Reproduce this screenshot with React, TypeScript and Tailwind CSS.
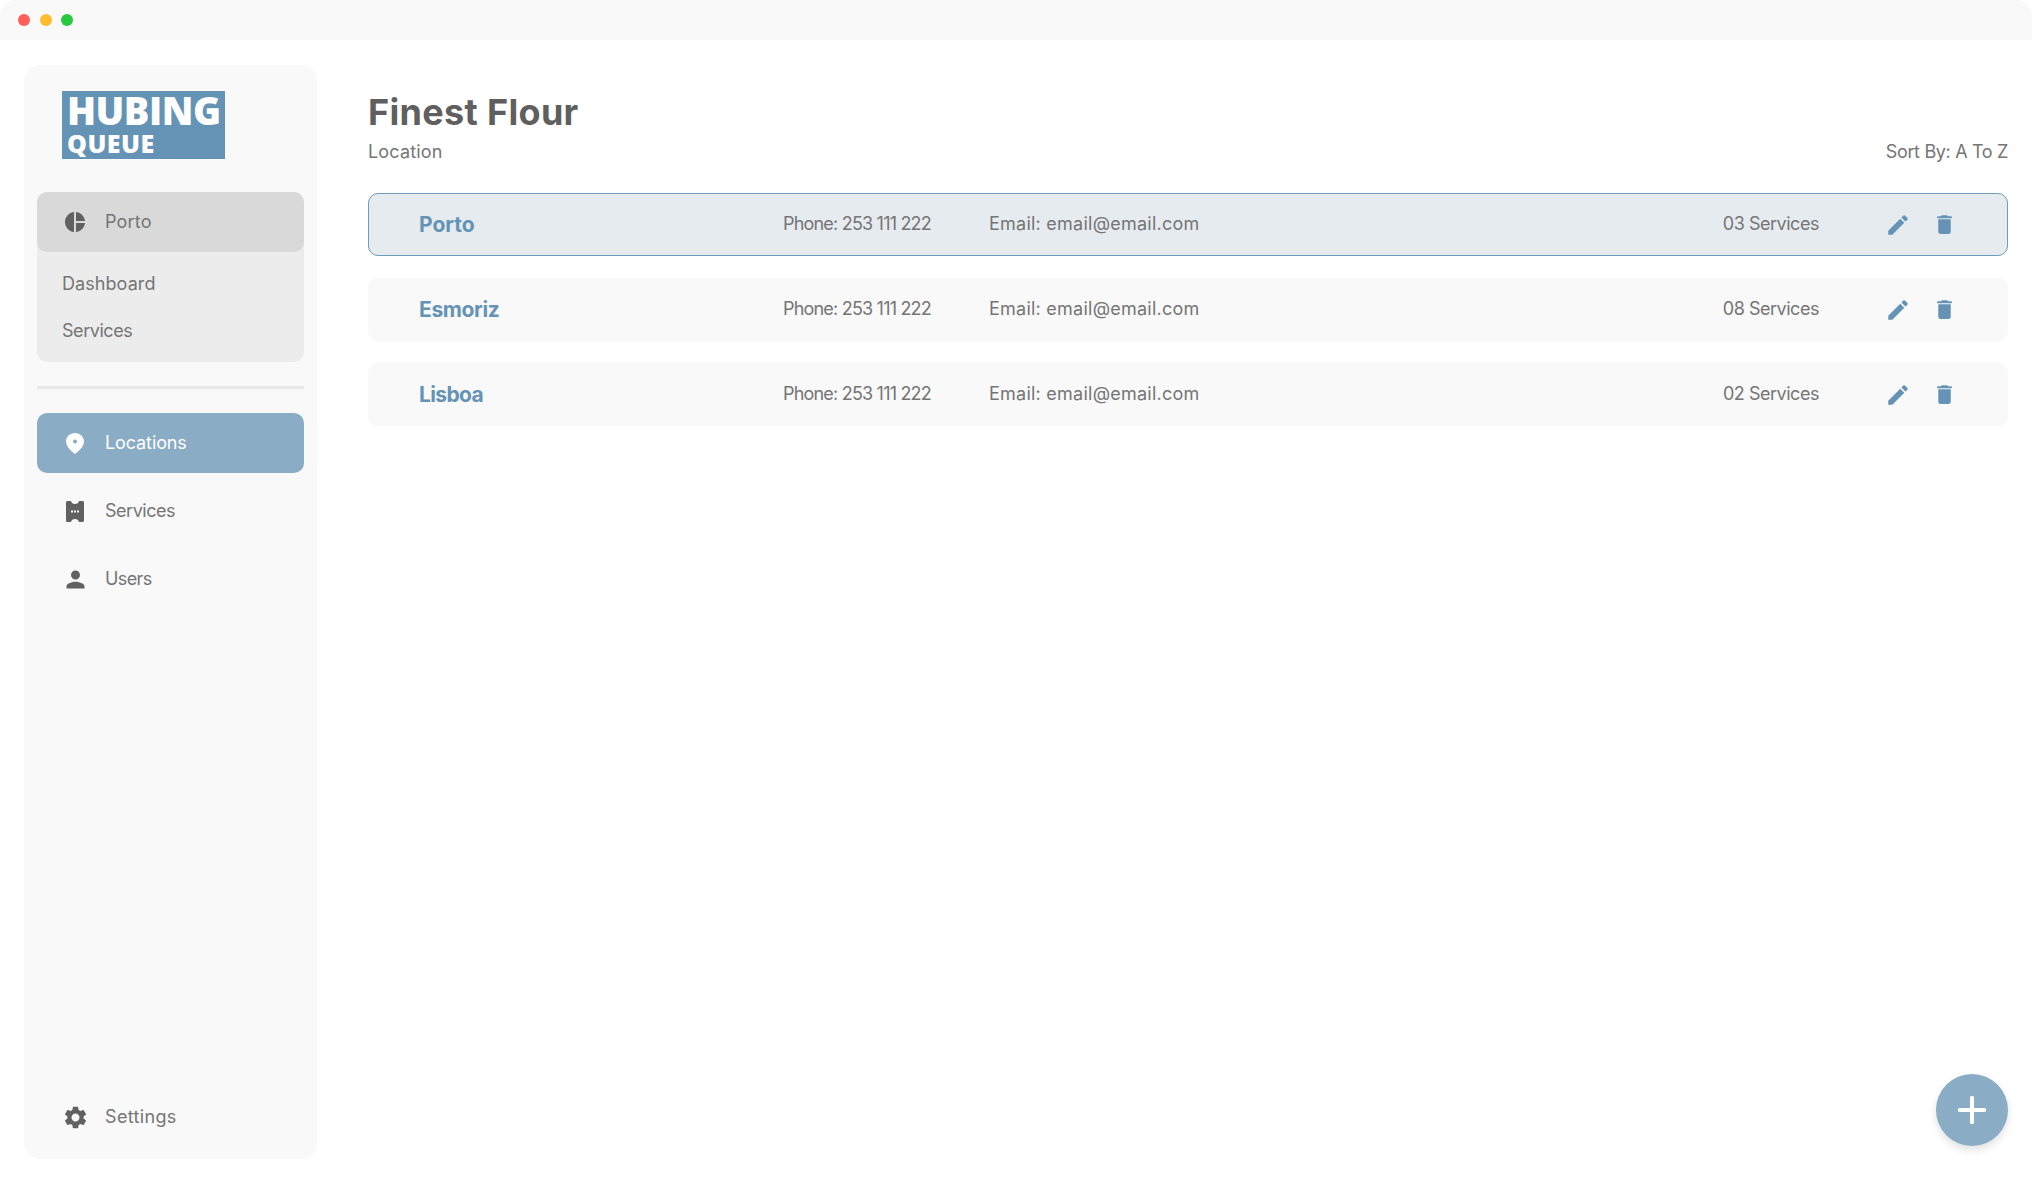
import { Plus } from "lucide-react";

const font = "font-['Inter','Liberation_Sans',sans-serif]";

const locations = [
  { name: "Porto", nameClass: "", services: "03 Services", selected: true },
  { name: "Esmoriz", nameClass: "tracking-[-0.37px]", services: "08 Services", selected: false },
  { name: "Lisboa", nameClass: "tracking-[-0.65px]", services: "02 Services", selected: false },
];

function PieIcon() {
  return (
    <svg viewBox="0 0 24 24" className="w-6 h-6 fill-[#616161]">
      <path d="M11 2v20c-5.07-.5-9-4.79-9-10s3.93-9.5 9-10zm2.03 0v8.99H22c-.47-4.74-4.24-8.52-8.97-8.99zm0 11.01V22c4.74-.47 8.5-4.25 8.97-8.99h-8.97z" />
    </svg>
  );
}

function PinIcon() {
  return (
    <svg viewBox="0 0 18 21" className="w-[18px] h-[21px] fill-white">
      <path
        fillRule="evenodd"
        d="M9 0C4 0 0 3.8 0 8.6 0 13.2 5 18.4 9 21c4-2.6 9-7.8 9-12.4C18 3.8 14 0 9 0zm0 6.6a2 2 0 1 1 0 4 2 2 0 0 1 0-4z"
      />
    </svg>
  );
}

function TicketIcon() {
  return (
    <svg viewBox="0 0 18 21" className="w-[18px] h-[21px] fill-[#616161]">
      <path
        fillRule="evenodd"
        d="M1.5 0H5c.3 1.8 2 3 4 3s3.700-1.200 4-3h3.500C17.400 0 18 .6 18 1.500v18c0 .9-.6 1.500-1.500 1.500H13c-.3-1.800-2-3-4-3s-3.700 1.200-4 3H1.500C.6 21 0 20.400 0 19.500v-18C0 .6.6 0 1.500 0zM5 9.500v2h2v-2H5zm3 0v2h2v-2H8zm3 0v2h2v-2h-2z"
      />
    </svg>
  );
}

function PersonIcon() {
  return (
    <svg viewBox="0 0 24 24" className="w-[27px] h-[27px] fill-[#616161]">
      <path d="M12 12c2.210 0 4-1.790 4-4s-1.790-4-4-4-4 1.790-4 4 1.790 4 4 4zm0 2c-2.670 0-8 1.340-8 4v2h16v-2c0-2.660-5.330-4-8-4z" />
    </svg>
  );
}

function GearIcon() {
  return (
    <svg viewBox="0 0 24 24" className="w-[27px] h-[27px] fill-[#616161]">
      <path d="M19.14 12.940c.04-.3.06-.61.06-.94 0-.32-.02-.64-.07-.94l2.030-1.580c.18-.14.23-.41.12-.61l-1.920-3.320c-.12-.22-.37-.29-.59-.22l-2.390.96c-.5-.38-1.030-.7-1.620-.94l-.36-2.540c-.04-.24-.24-.41-.48-.41h-3.840c-.24 0-.43.17-.47.41l-.36 2.540c-.59.24-1.130.57-1.620.94l-2.390-.96c-.22-.08-.47 0-.59.22L2.740 8.870c-.12.21-.08.47.12.61l2.030 1.580c-.05.3-.09.63-.09.94s.02.64.07.94l-2.030 1.580c-.18.14-.23.41-.12.61l1.920 3.320c.12.22.37.29.59.22l2.390-.96c.5.38 1.030.7 1.620.94l.36 2.540c.05.24.24.41.48.41h3.840c.24 0 .44-.17.47-.41l.36-2.540c.59-.24 1.130-.56 1.620-.94l2.390.96c.22.08.47 0 .59-.22l1.920-3.320c.12-.22.07-.47-.12-.61l-2.010-1.580zM12 15.600c-1.980 0-3.600-1.620-3.600-3.600s1.620-3.600 3.600-3.600 3.600 1.620 3.600 3.600-1.620 3.600-3.600 3.600z" />
    </svg>
  );
}

function EditIcon() {
  return (
    <svg viewBox="0 0 24 24" className="w-[26px] h-[26px] fill-[#6593b6]">
      <path d="M3 17.250V21h3.750L17.810 9.940l-3.750-3.750L3 17.250zM20.710 7.040c.39-.39.39-1.020 0-1.410l-2.340-2.340c-.39-.39-1.020-.39-1.410 0l-1.830 1.830 3.750 3.750 1.830-1.830z" />
    </svg>
  );
}

function TrashIcon() {
  return (
    <svg viewBox="0 0 24 24" className="w-[25px] h-[25px] fill-[#6593b6]">
      <path d="M6 19c0 1.100.9 2 2 2h8c1.100 0 2-.9 2-2V7H6v12zM19 4h-3.500l-1-1h-5l-1 1H5v2h14V4z" />
    </svg>
  );
}

function NavItem({
  icon,
  label,
  labelClass,
  active,
}: {
  icon: React.ReactNode;
  label: string;
  labelClass: string;
  active?: boolean;
}) {
  return (
    <div
      className={`h-[60px] rounded-[10px] flex items-center ${
        active ? "bg-[#8aacc5] text-white" : "text-[#757575]"
      }`}
    >
      <span className="w-[68px] flex justify-center shrink-0 pl-[8px]">{icon}</span>
      <span className={`text-[18px] -translate-y-px ${labelClass}`}>{label}</span>
    </div>
  );
}

export default function App() {
  return (
    <div className={`${font} w-[2032px] h-[1184px] bg-white overflow-hidden flex flex-col`}>
      {/* Title bar */}
      <div className="h-10 shrink-0 bg-[#f9f9f9] rounded-t-[16px] flex items-center gap-[9.500px] pl-[18px]">
        <span className="w-3 h-3 rounded-full bg-[#ff5f57]" />
        <span className="w-3 h-3 rounded-full bg-[#febc2e]" />
        <span className="w-3 h-3 rounded-full bg-[#28c840]" />
      </div>

      <div className="flex flex-1 pt-[25px] pb-[25px] pl-6 pr-6">
        {/* Sidebar */}
        <aside className="w-[293px] shrink-0 bg-[#f9f9f9] rounded-[16px] px-[13px] flex flex-col">
          <div className="ml-[25px] mt-[26px] w-[163px] h-[68px] shrink-0 bg-[#6593b6] text-white font-['Open_Sans',sans-serif] font-extrabold pl-[5px] flex flex-col">
            <span className="text-[38px] leading-[38px] tracking-[-0.5px]">HUBING</span>
            <span className="text-[25px] leading-[28px] tracking-[0.5px]">QUEUE</span>
          </div>

          <div className="mt-[33px] bg-[#ececec] rounded-[10px] h-[170px] shrink-0">
            <div className="h-[60px] bg-[#d9d9d9] rounded-[10px] flex items-center text-[#757575]">
              <span className="w-[68px] flex justify-center shrink-0 pl-[8px]">
                <PieIcon />
              </span>
              <span className="text-[18px] -translate-y-px tracking-[0.18px]">Porto</span>
            </div>
            <div className="pl-[25px] pt-[19px] flex flex-col gap-[22px] text-[18px] leading-[25px] text-[#757575]">
              <span className="tracking-[0.07px]">Dashboard</span>
              <span className="tracking-[-0.45px]">Services</span>
            </div>
          </div>

          <div className="mt-6 h-[3px] bg-[#e8e8e8] shrink-0" />

          <div className="mt-6 flex flex-col gap-[8px]">
            <NavItem icon={<PinIcon />} label="Locations" labelClass="tracking-[-0.11px]" active />
            <NavItem icon={<TicketIcon />} label="Services" labelClass="tracking-[-0.47px]" />
            <NavItem icon={<PersonIcon />} label="Users" labelClass="tracking-[-0.6px]" />
          </div>

          <div className="mt-auto mb-[12px]">
            <NavItem icon={<GearIcon />} label="Settings" labelClass="tracking-[0.34px]" />
          </div>
        </aside>

        {/* Main */}
        <main className="flex-1 ml-[51px] relative">
          <h1 className="mt-[25px] text-[36px] leading-[44px] font-bold tracking-[0.33px] text-[#5f5f5f]">
            Finest Flour
          </h1>
          <div className="mt-[5px] flex justify-between text-[18px] leading-[26px] text-[#757575]">
            <span className="tracking-[0.18px]">Location</span>
            <span className="tracking-[-0.34px]">Sort By: A To Z</span>
          </div>

          <div className="mt-[28px] flex flex-col gap-[22px]">
            {locations.map((loc) => (
              <div
                key={loc.name}
                className={`h-[63px] rounded-[10px] border flex items-center text-[18px] text-[#757575] ${
                  loc.selected ? "bg-[#e6ebf0] border-[#6f9bbc]" : "bg-[#f9f9f9] border-[#f9f9f9]"
                }`}
              >
                <span className={`w-[414px] pl-[50px] shrink-0 text-[21px] font-bold text-[#6593b6] ${loc.nameClass}`}>
                  {loc.name}
                </span>
                <span className="w-[206px] shrink-0 -translate-y-px tracking-[-0.8px]">Phone: 253 111 222</span>
                <span className="flex-1 -translate-y-px tracking-[0.24px]">Email: email@email.com</span>
                <span className="-translate-y-px tracking-[-0.47px]">{loc.services}</span>
                <span className="ml-[66px] w-[26px] flex justify-center">
                  <EditIcon />
                </span>
                <span className="ml-[21px] mr-[50px] w-[25px] flex justify-center">
                  <TrashIcon />
                </span>
              </div>
            ))}
          </div>

          <button className="absolute right-0 bottom-[13px] w-[72px] h-[72px] rounded-full bg-[#8aacc5] shadow-[0_4px_8px_rgba(0,0,0,0.12)] flex items-center justify-center text-white">
            <Plus size={42} strokeWidth={2.3} />
          </button>
        </main>
      </div>
    </div>
  );
}
